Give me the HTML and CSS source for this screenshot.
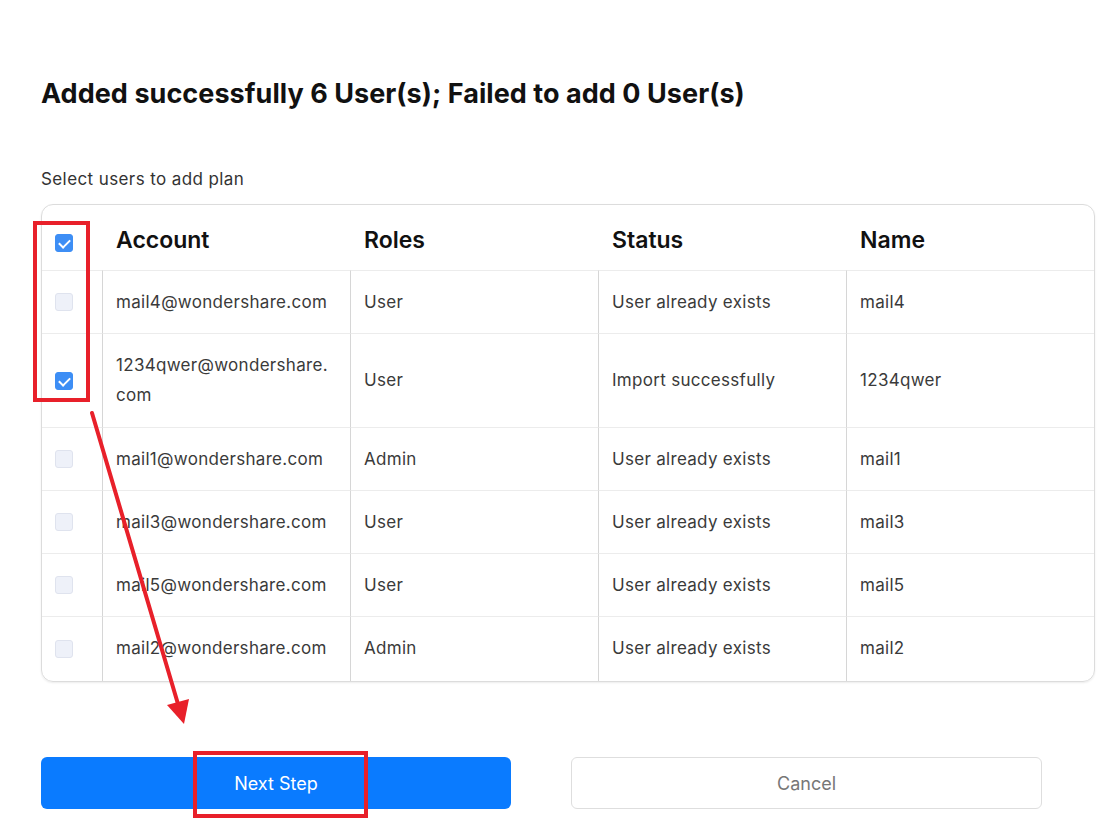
FILE: index.html
```html
<!DOCTYPE html>
<html lang="en">
<head>
<meta charset="utf-8">
<title>Add users</title>
<link rel="stylesheet" href="styles.css">
</head>
<body>
<main class="page">
  <h1 class="title">Added successfully 6 User(s); Failed to add 0 User(s)</h1>
  <p class="subtitle">Select users to add plan</p>
  <div class="table-wrap">
    <table class="users">
      <colgroup>
        <col class="c-check"><col class="c-col"><col class="c-col"><col class="c-col"><col class="c-col">
      </colgroup>
      <thead>
        <tr>
          <th class="check-cell"><span class="cb checked head-cb"></span></th>
          <th>Account</th>
          <th>Roles</th>
          <th>Status</th>
          <th>Name</th>
        </tr>
      </thead>
      <tbody>
        <tr>
          <td class="check-cell"><span class="cb"></span></td>
          <td>mail4@wondershare.com</td><td>User</td><td>User already exists</td><td>mail4</td>
        </tr>
        <tr>
          <td class="check-cell"><span class="cb checked"></span></td>
          <td>1234qwer@wondershare.<wbr>com</td><td>User</td><td>Import successfully</td><td>1234qwer</td>
        </tr>
        <tr>
          <td class="check-cell"><span class="cb"></span></td>
          <td>mail1@wondershare.com</td><td>Admin</td><td>User already exists</td><td>mail1</td>
        </tr>
        <tr>
          <td class="check-cell"><span class="cb"></span></td>
          <td>mail3@wondershare.com</td><td>User</td><td>User already exists</td><td>mail3</td>
        </tr>
        <tr>
          <td class="check-cell"><span class="cb"></span></td>
          <td>mail5@wondershare.com</td><td>User</td><td>User already exists</td><td>mail5</td>
        </tr>
        <tr>
          <td class="check-cell"><span class="cb"></span></td>
          <td>mail2@wondershare.com</td><td>Admin</td><td>User already exists</td><td>mail2</td>
        </tr>
      </tbody>
    </table>
  </div>
  <div class="actions">
    <button class="btn btn-primary">Next Step</button>
    <button class="btn btn-default">Cancel</button>
  </div>
</main>
<svg class="annot" width="1107" height="832" viewBox="0 0 1107 832" aria-hidden="true">
  <rect x="35" y="223" width="53" height="177" fill="none" stroke="#e8202a" stroke-width="4"/>
  <rect x="195" y="753" width="171" height="63" fill="none" stroke="#e8202a" stroke-width="4"/>
  <line x1="92" y1="413" x2="178" y2="704" stroke="#e8202a" stroke-width="4" stroke-linecap="round"/>
  <polygon points="184,724 167,705 189,699" fill="#e8202a"/>
</svg>
</body>
</html>
```
FILE: styles.css
```css
html, body {
  margin: 0;
  padding: 0;
  background: #fff;
}
body {
  font-family: Inter, "Noto Sans", "Liberation Sans", sans-serif;
  color: #222;
  position: relative;
  width: 1107px;
  height: 832px;
  overflow: hidden;
}
.page {
  padding: 75px 0 0 41px;
  width: 1054px;
}
.title {
  margin: 0;
  font-size: 27px;
  line-height: 37px;
  font-weight: 700;
  color: #111;
  letter-spacing: 0.05px;
}
.subtitle {
  margin: 56px 0 0;
  font-size: 17px;
  line-height: 22px;
  color: #333;
  letter-spacing: 0.4px;
}
.table-wrap {
  margin-top: 14px;
  border: 1px solid #dcdcdc;
  border-radius: 12px;
  overflow: hidden;
  box-shadow: 0 1px 2px rgba(0, 0, 0, 0.08);
}
.users {
  width: 1052px;
  border-collapse: separate;
  border-spacing: 0;
  table-layout: fixed;
}
.c-check { width: 60px; }
.c-col { width: 248px; }
.users th {
  text-align: left;
  font-size: 23px;
  font-weight: 600;
  color: #111;
  line-height: 30px;
  padding: 20px 14px 15px;
}
.users td {
  font-size: 17px;
  letter-spacing: 0.3px;
  color: #3a3a3a;
  line-height: 30px;
  padding: 16px 13px 16px;
  border-top: 1px solid #ececec;
  border-left: 1px solid #d6d6d6;
  vertical-align: middle;
}
.users tbody tr:nth-child(2) td:not(.check-cell) {
  padding-bottom: 17px;
}
.users tbody tr:last-child td:not(.check-cell) {
  padding-bottom: 18px;
}
.users td.check-cell {
  border-left: none;
}
.users .check-cell {
  padding: 0 0 0 13px;
  line-height: 0;
}
.cb {
  display: inline-block;
  width: 18px;
  height: 18px;
  border-radius: 3px;
  box-sizing: border-box;
  background: #eef1f9;
  border: 1px solid #dfe3ee;
  position: relative;
  vertical-align: middle;
}
.cb.checked {
  background: #3d8ef5;
  border-color: #3d8ef5;
}
.cb.checked::after {
  content: "";
  position: absolute;
  left: 5px;
  top: 2px;
  width: 5px;
  height: 9px;
  border-right: 2px solid #fff;
  border-bottom: 2px solid #fff;
  transform: rotate(45deg);
}
.head-cb {
  margin-top: 10px;
}
.actions {
  margin-top: 75px;
  display: grid;
  grid-template-columns: 470px 471px;
  column-gap: 60px;
}
.btn {
  height: 52px;
  border-radius: 6px;
  font-family: Inter, "Noto Sans", "Liberation Sans", sans-serif;
  font-size: 18px;
  cursor: pointer;
}
.btn-primary {
  background: #0a7bff;
  border: none;
  color: #fff;
}
.btn-default {
  background: #fff;
  border: 1px solid #dedede;
  color: #777;
}
.annot {
  position: absolute;
  left: 0;
  top: 0;
  pointer-events: none;
}
```
